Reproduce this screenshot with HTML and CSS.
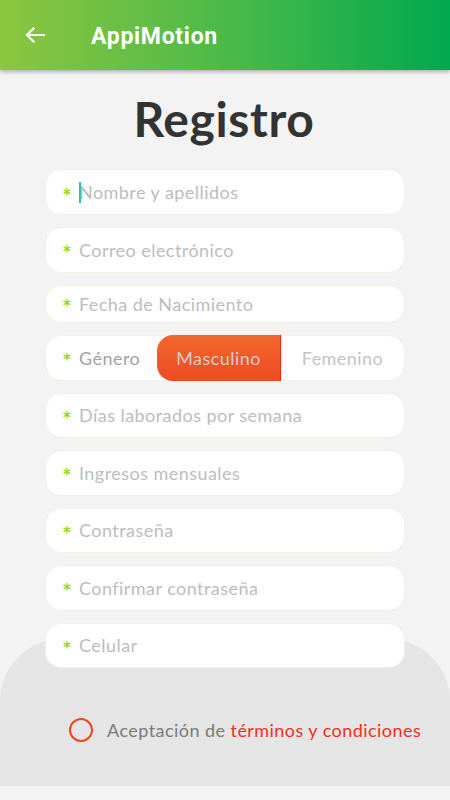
FILE: index.html
```html
<!DOCTYPE html>
<html lang="es">
<head>
<meta charset="utf-8">
<title>AppiMotion - Registro</title>
<link rel="stylesheet" href="styles.css">
</head>
<body>
<header class="appbar">
  <svg class="back" width="20" height="16" viewBox="0 0 20 16" aria-hidden="true">
    <path d="M19 8H2M8.5 1.5L2 8l6.5 6.5" fill="none" stroke="#fff" stroke-width="2.2" stroke-linecap="square"/>
  </svg>
  <span class="appbar-title">AppiMotion</span>
</header>
<main class="page">
  <h1 class="title">Registro</h1>
  <form class="form">
    <div class="field first"><span class="req">*</span><span class="caret"></span><span class="ph">Nombre y apellidos</span></div>
    <div class="field"><span class="req">*</span><span class="ph">Correo electrónico</span></div>
    <div class="field short"><span class="req">*</span><span class="ph">Fecha de Nacimiento</span></div>
    <div class="field gender">
      <span class="req">*</span><span class="label">Género</span>
      <span class="seg active">Masculino</span>
      <span class="seg">Femenino</span>
    </div>
    <div class="field"><span class="req">*</span><span class="ph">Días laborados por semana</span></div>
    <div class="field"><span class="req">*</span><span class="ph">Ingresos mensuales</span></div>
    <div class="field"><span class="req">*</span><span class="ph">Contraseña</span></div>
    <div class="field"><span class="req">*</span><span class="ph">Confirmar contraseña</span></div>
    <div class="field"><span class="req">*</span><span class="ph">Celular</span></div>
  </form>
  <section class="footer">
    <div class="terms">
      <span class="radio"></span>
      <span class="terms-text">Aceptación de <span class="link">términos y condiciones</span></span>
    </div>
  </section>
</main>
</body>
</html>
```
FILE: styles.css
```css
html, body {
  margin: 0;
  padding: 0;
}
body {
  width: 450px;
  height: 800px;
  overflow: hidden;
  background: #f3f3f3;
  font-family: Lato, "Open Sans", sans-serif;
}
.appbar {
  height: 70px;
  display: flex;
  align-items: center;
  padding-left: 25px;
  box-sizing: border-box;
  background: linear-gradient(to right, #8dc63f, #4cba48 50%, #00a94f);
  box-shadow: 0 2px 4px rgba(0, 0, 0, 0.28);
  position: relative;
  z-index: 2;
}
.back {
  display: block;
  margin-right: 46px;
}
.appbar-title {
  color: #fff;
  font-family: Roboto, sans-serif;
  font-weight: 700;
  font-size: 23px;
  letter-spacing: 0.7px;
  padding-top: 2px;
}
.page {
  display: flex;
  flex-direction: column;
}
.title {
  margin: 20px 0 0;
  text-align: center;
  font-family: Lato, sans-serif;
  font-weight: 700;
  font-size: 48px;
  line-height: 58px;
  letter-spacing: 0.6px;
  color: #333;
  padding-right: 2px;
}
.form {
  margin: 21px 0 0 45px;
  width: 360px;
  display: flex;
  flex-direction: column;
  gap: 12px;
  position: relative;
  z-index: 1;
}
.field {
  height: 45.5px;
  box-sizing: border-box;
  background: #fff;
  border: 1px solid #f1f2df;
  border-radius: 16px;
  display: flex;
  align-items: center;
  padding-left: 17px;
  font-size: 18px;
  letter-spacing: 0.45px;
  position: relative;
}
.field.first {
  height: 46px;
}
.field.short {
  height: 38px;
}
.field.gender {
  height: 46px;
  padding-right: 0;
}
.req {
  color: #97d81a;
  font-family: "DejaVu Sans", sans-serif;
  font-size: 15px;
  font-weight: 700;
  line-height: 1;
  width: 16px;
  position: relative;
  top: 3px;
  letter-spacing: 0;
}
.caret {
  width: 2px;
  height: 21px;
  background: #1fc2a2;
  margin-right: -2px;
}
.ph {
  color: #bdbdbd;
}
.label {
  color: #a3a3a3;
  width: 78px;
}
.seg {
  height: 46px;
  margin-top: -1px;
  margin-bottom: -1px;
  display: flex;
  align-items: center;
  justify-content: center;
  color: #c4c4c4;
  width: 124px;
}
.seg.active {
  width: 124px;
  background: linear-gradient(to bottom, #f2682c, #ee4a24);
  border-radius: 16px 0 0 16px;
  border-right: 1px solid #ff2a0a;
  box-sizing: border-box;
  color: #d2cccc;
}
.seg:last-child {
  flex: 1;
}
.footer {
  margin-top: -29px;
  height: 147px;
  background: #e5e5e5;
  border-radius: 62px 62px 0 0;
  display: flex;
}
.terms {
  margin: 79px 0 0 69px;
  height: 24px;
  display: flex;
  align-items: center;
}
.radio {
  width: 24px;
  height: 24px;
  box-sizing: border-box;
  border: 2px solid #f2471c;
  border-radius: 50%;
  margin-right: 14px;
}
.terms-text {
  font-size: 18px;
  letter-spacing: 0.45px;
  color: #7a7a7a;
}
.link {
  color: #f5301a;
}
```
